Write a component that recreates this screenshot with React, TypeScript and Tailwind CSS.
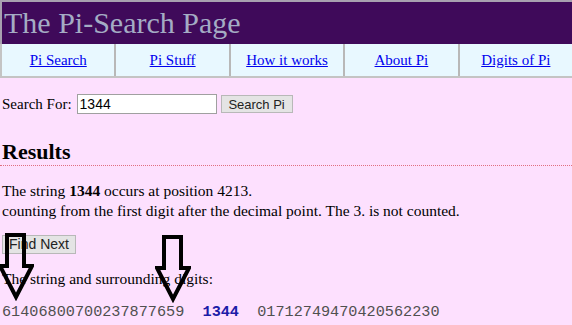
import React from "react";

const Arrow = ({ className }: { className: string }) => (
  <svg className={className} width="36" height="68" viewBox="0 0 36 68">
    <path
      d="M9 2 H26 V33 H34 L18 64 L2 33 H9 Z"
      fill="none"
      stroke="#000"
      strokeWidth="4"
      strokeLinejoin="miter"
    />
  </svg>
);

const links = ["Pi Search", "Pi Stuff", "How it works", "About Pi", "Digits of Pi"];

export default function App() {
  return (
    <div className="relative w-[572px] h-[325px] overflow-hidden bg-[#fde0fe] text-black font-['Liberation_Serif',serif] text-[15.5px]">
      <div className="h-[44px] bg-[#3f0a5a] border-t-2 border-l-2 border-[#a8a0b0] pl-[2px] flex items-center">
        <h1 className="text-[30px] leading-none text-[#a4acc4] -mt-[1px]">The Pi-Search Page</h1>
      </div>
      <div className="flex h-[34px] bg-[#e8f8ff] border-l-2 border-b-2 border-[#c4c4c4] text-[15px]">
        {links.map((l, i) => (
          <div
            key={l}
            className={`flex-1 flex items-center justify-center ${i < links.length - 1 ? "border-r-2 border-[#b8b8b8]" : ""}`}
          >
            <a href="#" className="text-[#0000ee] underline">{l}</a>
          </div>
        ))}
      </div>

      <div className="pl-[2px] pt-[16px] flex items-center h-[20px] box-content text-[15px]">
        <span>Search For:</span>
        <input
          readOnly
          value="1344"
          className="ml-[5px] w-[140px] h-[20px] bg-white border border-[#a0a0a0] px-[2px] text-[14px] font-['Liberation_Sans',sans-serif]"
        />
        <button className="ml-[4px] h-[18px] w-[72px] bg-[#e4e4e4] border border-[#b8b8b8] text-[13px] text-[#222] font-['Liberation_Sans',sans-serif] leading-none">
          Search Pi
        </button>
      </div>

      <h2 className="mt-[26px] pl-[2px] text-[22px] font-bold leading-[24px] border-b border-dotted border-[#e07080] pb-[1px]">Results</h2>

      <p className="mt-[15px] pl-[2px] leading-[20px]">
        The string <b>1344</b> occurs at position 4213.
        <br />
        counting from the first digit after the decimal point. The 3. is not counted.
      </p>

      <div className="mt-[11px] pl-[2px]">
        <button className="h-[19px] w-[74px] bg-[#e4e4e4] border border-[#b8b8b8] text-[14px] text-[#222] font-['Liberation_Sans',sans-serif] leading-none">
          Find Next
        </button>
      </div>

      <p className="mt-[14px] pl-[2px] leading-[20px]">The string and surrounding digits:</p>

      <p className="mt-[13px] pl-[2px] whitespace-pre font-['Liberation_Mono',monospace] text-[15.2px] leading-[20px] text-[#505050]">
        {"61406800700237877659  "}
        <b className="text-[#1c1ca8]">1344</b>
        {"  01712749470420562230"}
      </p>

      <Arrow className="absolute left-[-2px] top-[233px]" />
      <Arrow className="absolute left-[155px] top-[235px]" />
    </div>
  );
}
